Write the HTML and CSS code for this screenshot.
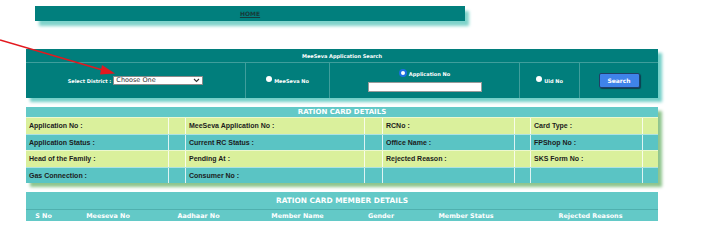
FILE: index.html
```html
<!DOCTYPE html>
<html lang="en">
<head>
    <meta charset="UTF-8">
    <title>Ration Card Search</title>
    <link rel="stylesheet" href="styles.css">
</head>
<body>
    <svg class="pointer-arrow" width="130" height="90" viewBox="0 0 130 90">
        <line x1="0" y1="40" x2="106" y2="71" stroke="#e3191f" stroke-width="1.6"/>
        <polygon points="115,73.5 102,65 100,74.5" fill="#e3191f"/>
    </svg>

    <div class="home-bar">
        <a href="#" class="home-link">HOME</a>
    </div>

    <div class="search-panel">
        <div class="panel-title">MeeSeva Application Search</div>
        <div class="panel-row">
            <div class="cell">
                <span class="field-label">Select District :</span>
                <span class="select-wrap">
                    <select class="district-select">
                        <option>Choose One</option>
                    </select>
                    <svg class="chevron" width="7" height="5" viewBox="0 0 7 5"><path d="M1 1 L3.5 3.5 L6 1" fill="none" stroke="#333" stroke-width="1.1"/></svg>
                </span>
            </div>
            <div class="cell">
                <span class="radio"></span><span class="field-label">MeeSeva No</span>
            </div>
            <div class="cell stacked">
                <div class="radio-line"><span class="radio checked"></span><span class="field-label">Application No</span></div>
                <input type="text" class="app-input">
            </div>
            <div class="cell">
                <span class="radio"></span><span class="field-label">Uid No</span>
            </div>
            <div class="cell">
                <button class="search-btn">Search</button>
            </div>
        </div>
    </div>

    <div class="details">
        <div class="details-title">RATION CARD DETAILS</div>
        <div class="details-row light">
            <div>Application No :</div><div></div>
            <div>MeeSeva Application No :</div><div></div>
            <div>RCNo :</div><div></div>
            <div>Card Type :</div><div></div>
        </div>
        <div class="details-row dark">
            <div>Application Status :</div><div></div>
            <div>Current RC Status :</div><div></div>
            <div>Office Name :</div><div></div>
            <div>FPShop No :</div><div></div>
        </div>
        <div class="details-row light">
            <div>Head of the Family :</div><div></div>
            <div>Pending At :</div><div></div>
            <div>Rejected Reason :</div><div></div>
            <div>SKS Form No :</div><div></div>
        </div>
        <div class="details-row dark">
            <div>Gas Connection :</div><div></div>
            <div>Consumer No :</div><div></div>
            <div></div><div></div>
            <div></div><div></div>
        </div>
    </div>

    <div class="members">
        <div class="members-title">RATION CARD MEMBER DETAILS</div>
        <div class="members-head">
            <div>S No</div>
            <div>Meeseva No</div>
            <div>Aadhaar No</div>
            <div>Member Name</div>
            <div>Gender</div>
            <div>Member Status</div>
            <div>Rejected Reasons</div>
        </div>
    </div>
</body>
</html>
```

FILE: styles.css
```css
body {
    margin: 0;
    padding-top: 6px;
    background-color: #ffffff;
    font-family: "DejaVu Sans", Verdana, sans-serif;
}
.pointer-arrow {
    position: absolute;
    left: 0;
    top: 0;
}
.home-bar {
    margin-left: 35px;
    width: 430px;
    height: 15px;
    background-color: #017f7d;
    box-shadow: 4px 5px 3px #7fd3cb;
    display: flex;
    align-items: center;
    justify-content: center;
}
.home-link {
    font-size: 6px;
    font-weight: bold;
    color: #173b3a;
}
.search-panel {
    margin: 28px 0 0 26px;
    width: 632px;
    background-color: #017e7c;
    box-shadow: 4px 4px 3px #74cfc8;
    color: white;
}
.panel-title {
    height: 14px;
    line-height: 14px;
    text-align: center;
    font-size: 5px;
    font-weight: bold;
    border-bottom: 1px solid #3f9e9c;
    box-sizing: border-box;
}
.panel-row {
    display: grid;
    grid-template-columns: 219px 84px 190px 60px 79px;
    height: 35px;
}
.cell {
    display: flex;
    align-items: center;
    justify-content: center;
    gap: 2px;
    border-left: 1px solid #3f9e9c;
}
.cell:first-child {
    border-left: none;
}
.cell.stacked {
    flex-direction: column;
    gap: 5px;
    padding-top: 2px;
}
.radio-line {
    display: flex;
    align-items: center;
    gap: 2px;
}
.field-label {
    font-size: 5px;
    font-weight: bold;
    color: #ffffff;
}
.radio {
    width: 6px;
    height: 6px;
    border-radius: 50%;
    background-color: #ffffff;
    margin-top: -3px;
}
.radio.checked {
    width: 4px;
    height: 4px;
    border: 2px solid #1a6fe0;
    margin-top: -2px;
}
.select-wrap {
    position: relative;
    display: inline-block;
}
.district-select {
    appearance: none;
    width: 90px;
    height: 9px;
    padding: 0 0 0 2px;
    border: 1px solid #8a8a8a;
    border-radius: 0;
    background-color: #ffffff;
    font-family: "DejaVu Sans", sans-serif;
    font-size: 6.5px;
    line-height: 7px;
    color: #333;
    display: block;
}
.chevron {
    position: absolute;
    right: 3px;
    top: 2px;
}
.app-input {
    width: 114px;
    height: 10px;
    box-sizing: border-box;
    border: 1px solid #9a9a9a;
    background-color: #ffffff;
    padding: 0;
}
.search-btn {
    width: 41px;
    height: 15px;
    background-color: #3f83ea;
    border: 1px solid #1f3f66;
    border-radius: 2px;
    color: #ffffff;
    font-family: "DejaVu Sans", sans-serif;
    font-size: 6px;
    font-weight: bold;
    padding: 0;
    box-shadow: 1px 1px 1px #0c3f50;
}
.details {
    margin: 9px 0 0 26px;
    width: 632px;
    box-shadow: 4px 4px 3px #8fc58e;
}
.details-title {
    height: 10px;
    line-height: 10px;
    text-align: center;
    background-color: #63c9c7;
    color: #ffffff;
    font-size: 7px;
    font-weight: bold;
}
.details-row {
    display: grid;
    grid-template-columns: 142px 17px 179px 18px 132px 16px 112px 16px;
    height: 16.5px;
    border-top: 1px solid rgba(255, 255, 255, 0.5);
    box-sizing: border-box;
    font-family: "Liberation Sans", Arial, sans-serif;
    font-size: 7px;
    font-weight: bold;
    color: #1c1c1c;
}
.details-row div {
    display: flex;
    align-items: center;
    padding-left: 3px;
    border-left: 1px solid rgba(255, 255, 255, 0.8);
}
.details-row div:first-child {
    border-left: none;
}
.details-row.light {
    background-color: #daf09c;
}
.details-row.dark {
    background-color: #5ac4c4;
}
.members {
    margin: 9px 0 0 26px;
    width: 632px;
    background-color: #63c9c7;
    color: #ffffff;
    font-weight: bold;
}
.members-title {
    height: 18px;
    line-height: 18px;
    text-align: center;
    font-size: 7.4px;
    border-bottom: 1px solid #4fb0ae;
    box-sizing: border-box;
}
.members-head {
    display: grid;
    grid-template-columns: 35px 94px 87px 111px 56px 114px 135px;
    height: 11px;
    align-items: center;
    text-align: center;
    font-size: 6.4px;
}
```
